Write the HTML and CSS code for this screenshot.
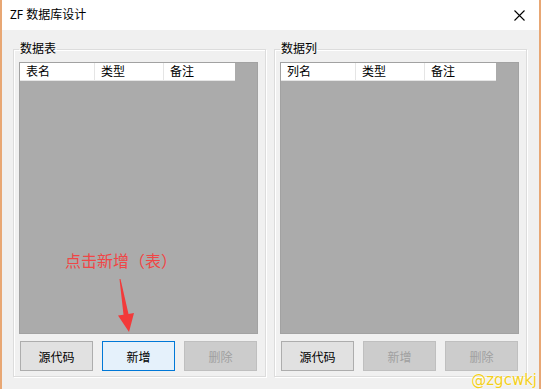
FILE: index.html
```html
<!DOCTYPE html>
<html lang="zh-CN">
<head>
  <meta charset="UTF-8" />
  <title>ZF 数据库设计</title>
  <link rel="stylesheet" href="styles.css">
</head>
<body>
  <div class="window">
    <div class="titlebar">
      <span class="title">ZF 数据库设计</span>
      <svg class="close" width="11" height="11" viewBox="0 0 11 11">
        <path d="M0.5 0.5 L10.5 10.5 M10.5 0.5 L0.5 10.5" stroke="#000" stroke-width="1.1" fill="none"/>
      </svg>
    </div>

    <div class="client">
      <fieldset class="group">
        <legend>数据表</legend>
        <div class="list">
          <div class="list-head">
            <div class="col col-name">表名</div>
            <div class="col col-type">类型</div>
            <div class="col col-note">备注</div>
          </div>
        </div>
        <div class="buttons">
          <button class="btn">源代码</button>
          <button class="btn btn-default">新增</button>
          <button class="btn" disabled>删除</button>
        </div>
      </fieldset>

      <fieldset class="group">
        <legend>数据列</legend>
        <div class="list">
          <div class="list-head">
            <div class="col col-name">列名</div>
            <div class="col col-type">类型</div>
            <div class="col col-note">备注</div>
          </div>
        </div>
        <div class="buttons">
          <button class="btn">源代码</button>
          <button class="btn" disabled>新增</button>
          <button class="btn" disabled>删除</button>
        </div>
      </fieldset>
    </div>

    <!-- annotation drawn over the form -->
    <div class="note">点击新增（表）</div>
    <svg class="arrow" width="26" height="60" viewBox="0 0 26 60">
      <polygon points="4.5,3 5.5,3 13.5,38 19,37 14,56 3,39.6 8.5,38.7" fill="#f23a3a"/>
    </svg>

    <div class="watermark">@zgcwkj</div>
  </div>
</body>
</html>
```

FILE: styles.css
```css
* {
  margin: 0;
  padding: 0;
  box-sizing: border-box;
}

body {
  background: #f0f0f0;
  font-family: "Noto Sans", "Noto Sans CJK SC", sans-serif;
  font-size: 12px;
  color: #000;
}

.window {
  position: relative;
  width: 541px;
  height: 389px;
  background: #f0f0f0;
  border-left: 2px solid #e8a774;
  border-right: 2px solid #e8a774;
  display: flex;
  flex-direction: column;
  overflow: hidden;
}

.titlebar {
  height: 30px;
  background: #fff;
  display: flex;
  align-items: center;
  padding-left: 8px;
}

.title {
  font-size: 12px;
  line-height: 16px;
}

.close {
  margin-left: auto;
  margin-right: 14px;
}

.client {
  flex: 1;
  display: flex;
  gap: 8px;
  padding: 11px 12px 12px 11px;
}

.group {
  flex: 1;
  min-width: 0;
  border: 1px solid #dcdcdc;
  box-shadow: inset 1px 1px 0 #fff, 1px 1px 0 #fff;
  padding: 5px 7px 5px 5px;
  display: flex;
  flex-direction: column;
}

.group legend {
  margin-left: 0;
  padding: 0 1px;
  font-size: 12px;
  line-height: 16px;
}

.list {
  height: 272px;
  background: #ababab;
  border: 1px solid #a2a2a2;
}

.list-head {
  display: flex;
  width: 215px;
  height: 18px;
  background: #fff;
  border-bottom: 1px solid #e5e5e5;
}

.col {
  padding-left: 6px;
  line-height: 17px;
  border-right: 1px solid #e5e5e5;
}

.col-name { width: 75px; }
.col-type { width: 69px; }
.col-note { width: 71px; border-right: none; }

.buttons {
  display: flex;
  gap: 9px;
  margin-top: 7px;
  padding-left: 1px;
}

.btn {
  width: 73px;
  height: 30px;
  border: 1px solid #adadad;
  background: #e1e1e1;
  font-family: "Noto Sans CJK SC", sans-serif;
  font-size: 12px;
  color: #000;
}

.btn-default {
  border-color: #0078d7;
  background: #e5f1fb;
}

.btn:disabled {
  border-color: #bfbfbf;
  background: #cccccc;
  color: #a0a0a0;
}

.note {
  position: absolute;
  left: 63px;
  top: 250px;
  font-family: "Noto Sans CJK SC", sans-serif;
  font-size: 16px;
  line-height: 21px;
  color: #f04646;
}

.arrow {
  position: absolute;
  left: 113px;
  top: 276px;
}

.watermark {
  position: absolute;
  right: 2px;
  bottom: 0;
  font-family: "DejaVu Sans", sans-serif;
  font-size: 15px;
  line-height: 18px;
  color: #f3cf1a;
  text-shadow: 0 0 1px #fff, 0 0 2px #fff;
}
```
